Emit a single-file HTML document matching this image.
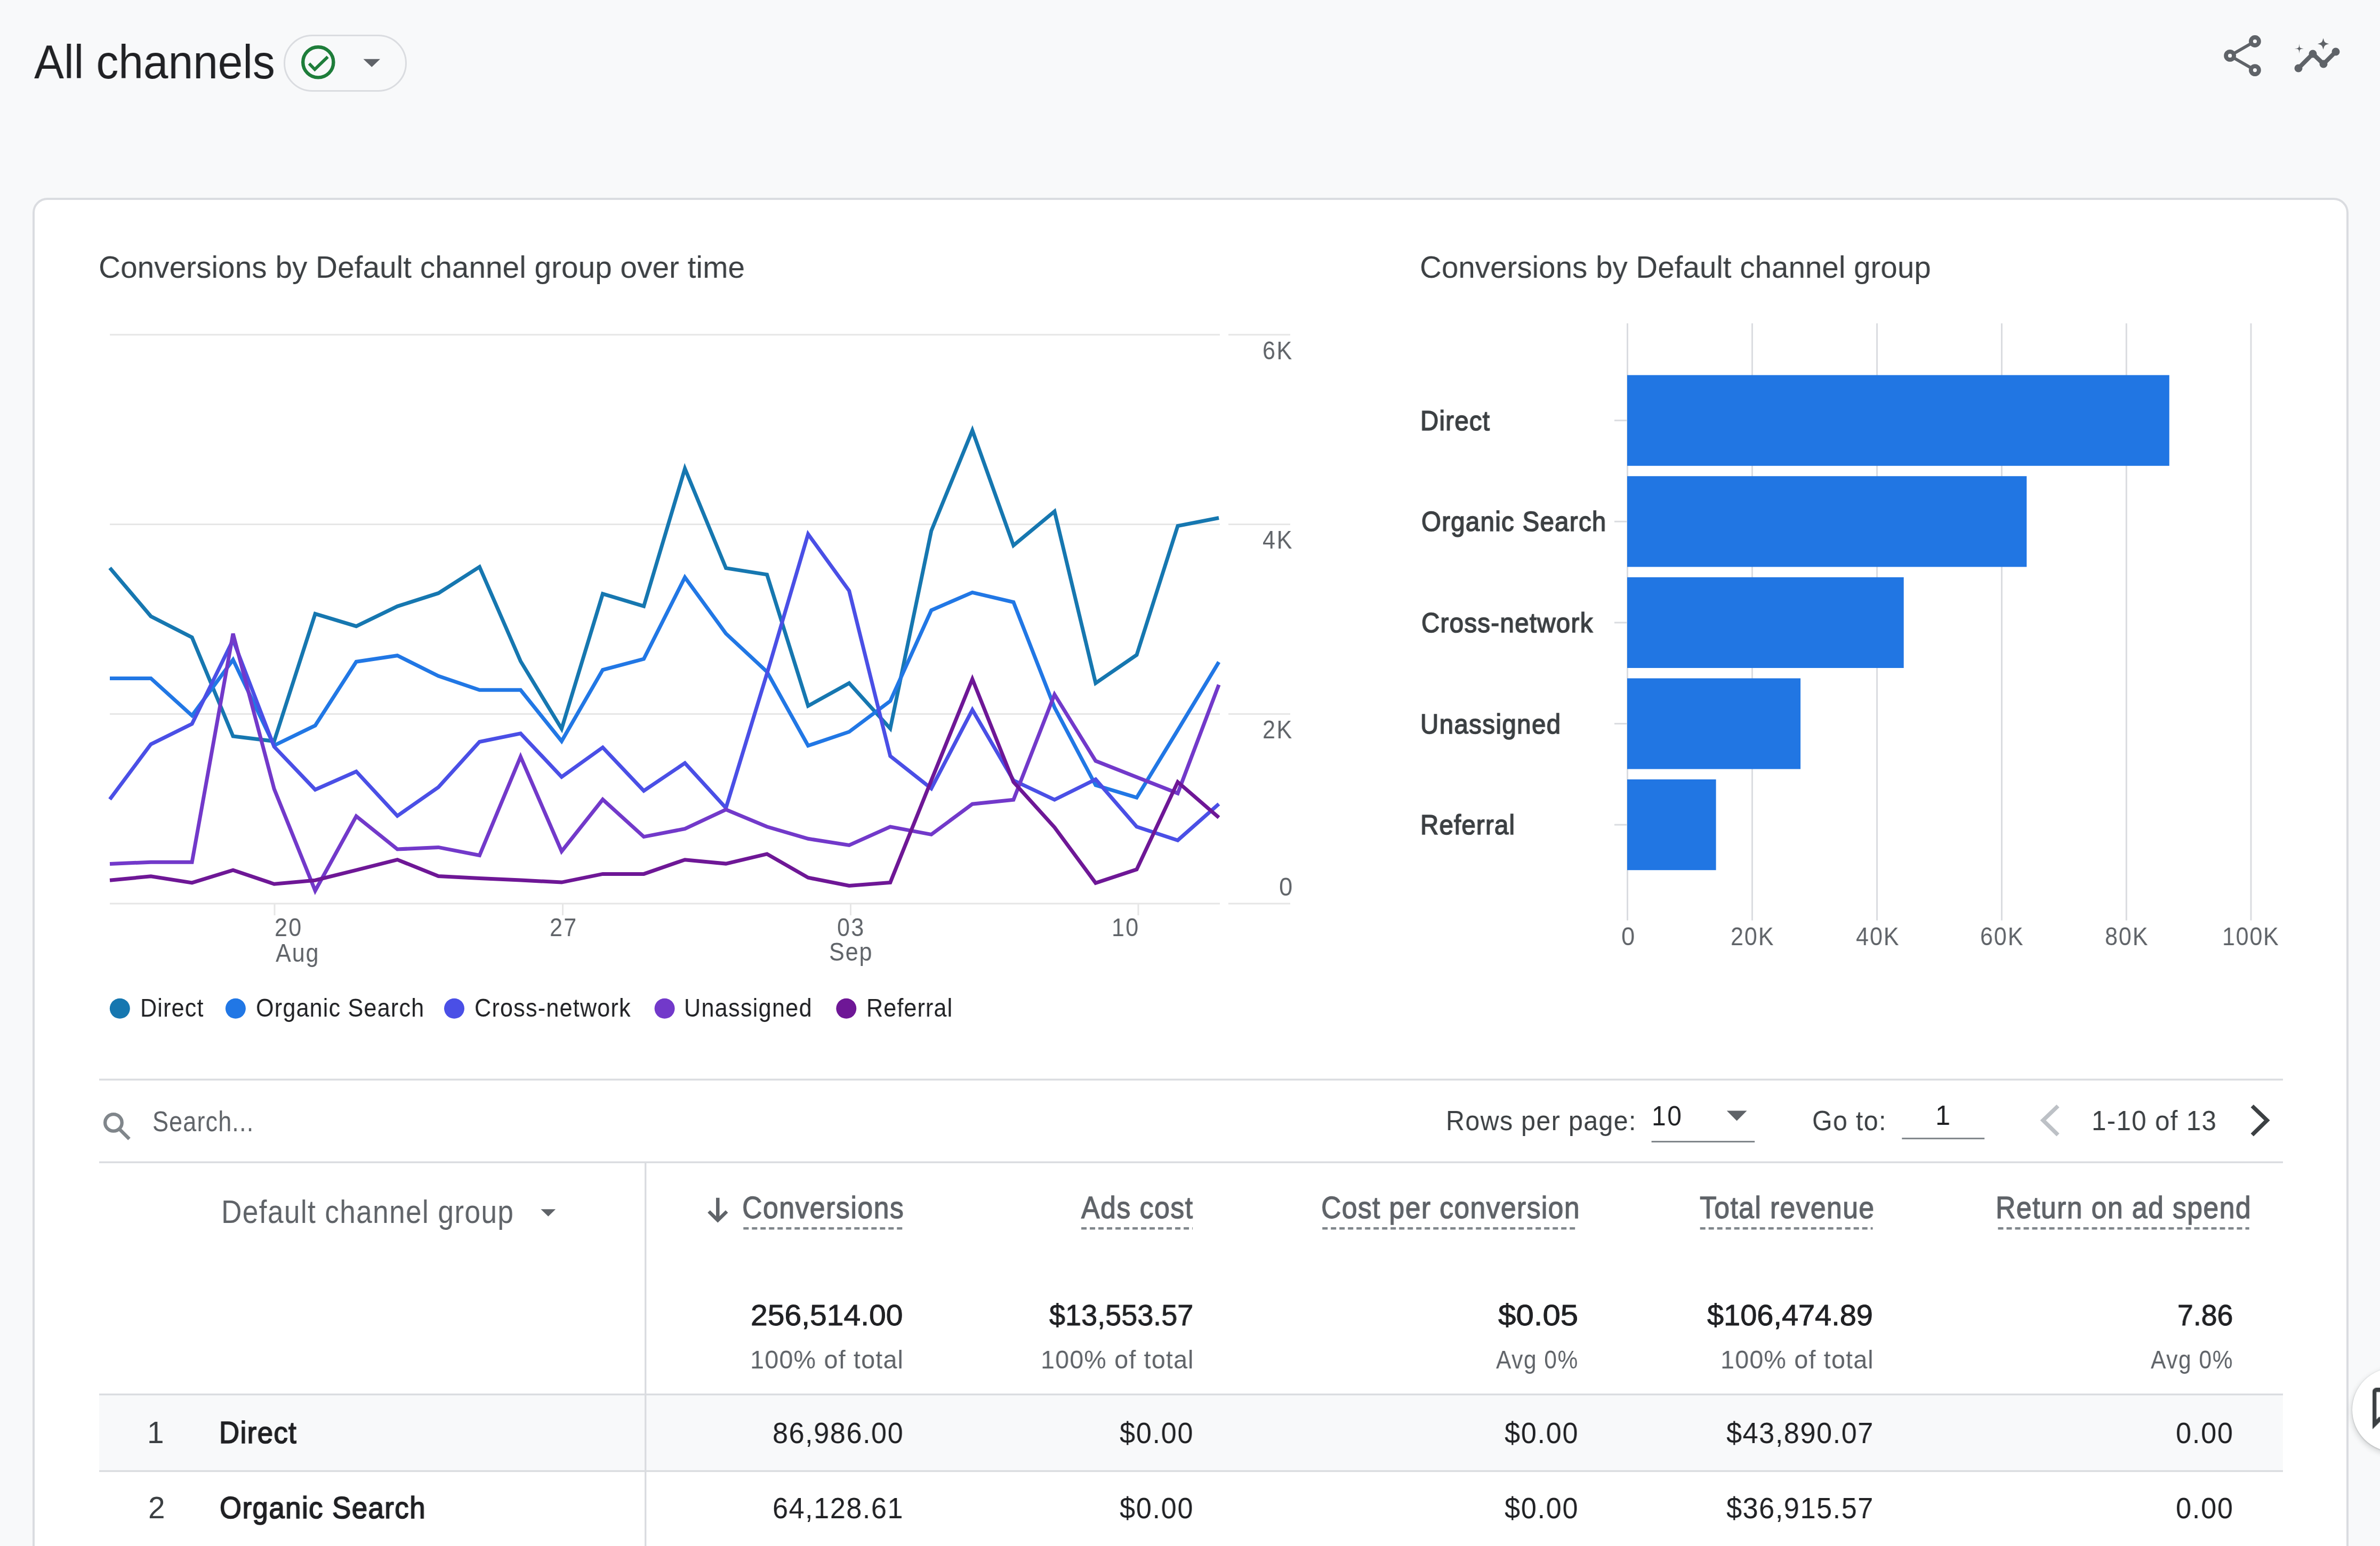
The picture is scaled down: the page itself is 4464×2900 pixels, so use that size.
<!DOCTYPE html>
<html><head><meta charset="utf-8"><title>All channels</title>
<style>
html,body{margin:0;padding:0;}
body{width:4464px;height:2900px;overflow:hidden;background:#f8f9fa;position:relative;font-family:'Liberation Sans', sans-serif;}
.t{position:absolute;line-height:1;white-space:pre;transform-origin:0 0;will-change:transform;}
.card{position:absolute;left:61px;top:371px;width:4344px;height:2700px;box-sizing:border-box;border:4px solid #dadce0;border-radius:28px;background:#fff;}
.pill{position:absolute;left:531.5px;top:65.1px;width:231.3px;height:106.5px;box-sizing:border-box;border:3px solid #dadce0;border-radius:54px;}
svg{overflow:visible}
</style></head><body>
<div class="card"></div>
<div class="pill"></div>
<svg style="position:absolute;left:0;top:0" width="4464" height="2900" viewBox="0 0 4464 2900">
<rect x="206" y="626.4" width="2082" height="3" fill="#e6e6e6"/>
<rect x="2304" y="626.4" width="116" height="3" fill="#e6e6e6"/>
<rect x="206" y="982.1" width="2082" height="3" fill="#e6e6e6"/>
<rect x="2304" y="982.1" width="116" height="3" fill="#e6e6e6"/>
<rect x="206" y="1337.8" width="2082" height="3" fill="#e6e6e6"/>
<rect x="2304" y="1337.8" width="116" height="3" fill="#e6e6e6"/>
<rect x="206" y="1693.5" width="2082" height="3" fill="#e6e6e6"/>
<rect x="2304" y="1693.5" width="116" height="3" fill="#e6e6e6"/>
<rect x="513.5" y="1695" width="3" height="22" fill="#e6e6e6"/>
<rect x="1054.0" y="1695" width="3" height="22" fill="#e6e6e6"/>
<rect x="1594.0" y="1695" width="3" height="22" fill="#e6e6e6"/>
<rect x="2133.5" y="1695" width="3" height="22" fill="#e6e6e6"/>
<polyline points="206.0,1065.2 283.0,1156.1 360.1,1195.6 437.1,1381.0 514.2,1390.4 591.2,1151.4 668.2,1174.7 745.3,1137.3 822.3,1112.7 899.4,1063.3 976.4,1240.2 1053.4,1367.0 1130.5,1113.9 1207.5,1137.2 1284.6,879.0 1361.6,1065.7 1438.6,1077.9 1515.7,1324.1 1592.7,1281.5 1669.8,1366.6 1746.8,995.8 1823.8,807.4 1900.9,1023.1 1977.9,959.3 2055.0,1281.4 2132.0,1228.5 2209.0,986.6 2286.1,971.5" fill="none" stroke="#1677b0" stroke-width="7" stroke-linejoin="miter" stroke-miterlimit="4"/>
<polyline points="206.0,1272.5 283.0,1272.5 360.1,1342.4 437.1,1237.6 514.2,1398.3 591.2,1361.0 668.2,1241.3 745.3,1229.7 822.3,1268.1 899.4,1294.3 976.4,1294.3 1053.4,1390.3 1130.5,1256.5 1207.5,1236.1 1284.6,1083.0 1361.6,1188.5 1438.6,1260.2 1515.7,1398.8 1592.7,1372.7 1669.8,1315.0 1746.8,1144.7 1823.8,1111.3 1900.9,1129.5 1977.9,1327.0 2055.0,1472.9 2132.0,1496.0 2209.0,1369.6 2286.1,1241.9" fill="none" stroke="#2177e5" stroke-width="7" stroke-linejoin="miter" stroke-miterlimit="4"/>
<polyline points="206.0,1499.4 283.0,1396.0 360.1,1357.8 437.1,1200.3 514.2,1400.6 591.2,1481.2 668.2,1447.2 745.3,1530.5 822.3,1476.5 899.4,1391.5 976.4,1375.8 1053.4,1457.3 1130.5,1402.0 1207.5,1483.4 1284.6,1431.4 1361.6,1515.6 1438.6,1263.3 1515.7,1001.9 1592.7,1108.3 1669.8,1418.3 1746.8,1479.1 1823.8,1331.6 1900.9,1463.8 1977.9,1500.2 2055.0,1461.9 2132.0,1550.7 2209.0,1576.2 2286.1,1508.1" fill="none" stroke="#4a4fe6" stroke-width="7" stroke-linejoin="miter" stroke-miterlimit="4"/>
<polyline points="206.0,1620.5 283.0,1617.2 360.1,1617.2 437.1,1188.7 514.2,1479.8 591.2,1670.8 668.2,1531.0 745.3,1593.0 822.3,1589.4 899.4,1604.5 976.4,1419.4 1053.4,1596.9 1130.5,1499.7 1207.5,1569.6 1284.6,1554.7 1361.6,1518.6 1438.6,1550.8 1515.7,1573.3 1592.7,1585.5 1669.8,1550.8 1746.8,1565.4 1823.8,1508.2 1900.9,1500.2 1977.9,1302.7 2055.0,1427.3 2132.0,1457.7 2209.0,1488.1 2286.1,1284.5" fill="none" stroke="#7239ca" stroke-width="7" stroke-linejoin="miter" stroke-miterlimit="4"/>
<polyline points="206.0,1651.2 283.0,1643.8 360.1,1655.9 437.1,1632.1 514.2,1658.2 591.2,1651.2 668.2,1632.1 745.3,1612.6 822.3,1643.5 899.4,1647.6 976.4,1651.0 1053.4,1655.1 1130.5,1639.4 1207.5,1639.4 1284.6,1612.7 1361.6,1620.1 1438.6,1601.9 1515.7,1646.3 1592.7,1661.5 1669.8,1655.4 1746.8,1463.9 1823.8,1273.8 1900.9,1466.8 1977.9,1551.9 2055.0,1656.4 2132.0,1630.9 2209.0,1466.8 2286.1,1533.6" fill="none" stroke="#6e1796" stroke-width="7" stroke-linejoin="miter" stroke-miterlimit="4"/>
<circle cx="224.8" cy="1891.7" r="19" fill="#1677b0"/>
<circle cx="441.9" cy="1891.7" r="19" fill="#2177e5"/>
<circle cx="852.0" cy="1891.7" r="19" fill="#4a4fe6"/>
<circle cx="1246.6" cy="1891.7" r="19" fill="#7239ca"/>
<circle cx="1587.3" cy="1891.7" r="19" fill="#6e1796"/>
<rect x="3051.0" y="606.5" width="3" height="1120" fill="#dadce0"/>
<rect x="3285.0" y="606.5" width="3" height="1120" fill="#dadce0"/>
<rect x="3519.1" y="606.5" width="3" height="1120" fill="#dadce0"/>
<rect x="3753.0" y="606.5" width="3" height="1120" fill="#dadce0"/>
<rect x="3986.8" y="606.5" width="3" height="1120" fill="#dadce0"/>
<rect x="4220.5" y="606.5" width="3" height="1120" fill="#dadce0"/>
<rect x="3052" y="703.6" width="1016.8" height="170.2" fill="#2176e3"/>
<rect x="3028" y="787.2" width="24" height="3" fill="#dadce0"/>
<rect x="3052" y="893.2" width="749.3" height="170.2" fill="#2176e3"/>
<rect x="3028" y="976.8" width="24" height="3" fill="#dadce0"/>
<rect x="3052" y="1082.8" width="518.7" height="170.2" fill="#2176e3"/>
<rect x="3028" y="1166.4" width="24" height="3" fill="#dadce0"/>
<rect x="3052" y="1272.4" width="325.1" height="170.2" fill="#2176e3"/>
<rect x="3028" y="1356.0" width="24" height="3" fill="#dadce0"/>
<rect x="3052" y="1462.0" width="166.6" height="170.2" fill="#2176e3"/>
<rect x="3028" y="1545.6" width="24" height="3" fill="#dadce0"/>
<rect x="186" y="2023.4" width="4096" height="3.4" fill="#dadce0"/>
<rect x="186" y="2178.5" width="4096" height="3.4" fill="#dadce0"/>
<rect x="186" y="2617.2" width="4096" height="141" fill="#f8f9fa"/>
<rect x="186" y="2614.0" width="4096" height="3.4" fill="#dadce0"/>
<rect x="186" y="2757.8" width="4096" height="3.4" fill="#dadce0"/>
<rect x="1209" y="2180" width="3.4" height="720" fill="#dadce0"/>
<line x1="1394.3" y1="2304.3" x2="1692.6" y2="2304.3" stroke="#80868b" stroke-width="4.5" stroke-dasharray="10 6"/>
<line x1="2028.1" y1="2304.3" x2="2237.0" y2="2304.3" stroke="#80868b" stroke-width="4.5" stroke-dasharray="10 6"/>
<line x1="2480.2" y1="2304.3" x2="2959.0" y2="2304.3" stroke="#80868b" stroke-width="4.5" stroke-dasharray="10 6"/>
<line x1="3188.7" y1="2304.3" x2="3512.6" y2="2304.3" stroke="#80868b" stroke-width="4.5" stroke-dasharray="10 6"/>
<line x1="3747.5" y1="2304.3" x2="4218.7" y2="2304.3" stroke="#80868b" stroke-width="4.5" stroke-dasharray="10 6"/>
<polygon points="1014.4,2268.3 1042.1,2268.3 1028.3,2281.8" fill="#5f6368"/>
<line x1="1346.3" y1="2246.8" x2="1346.3" y2="2286" stroke="#5f6368" stroke-width="6.5"/>
<polyline points="1329.5,2272.5 1346.3,2289 1363.2,2272.5" fill="none" stroke="#5f6368" stroke-width="6.5"/>
<circle cx="212.9" cy="2105.9" r="15.8" fill="none" stroke="#80868b" stroke-width="6.3"/>
<line x1="224" y1="2118" x2="242.5" y2="2136.5" stroke="#80868b" stroke-width="6.5"/>
<polygon points="3238.8,2083.5 3276.5,2083.5 3257.6,2102.4" fill="#5f6368"/>
<rect x="3097.6" y="2140" width="193.6" height="3" fill="#80868b"/>
<rect x="3567.3" y="2134.1" width="154.9" height="3" fill="#80868b"/>
<polyline points="3860,2074.6 3832,2101.5 3860,2128.9" fill="none" stroke="#bdc1c6" stroke-width="7.5"/>
<polyline points="4224.2,2074.6 4252.2,2101.5 4224.2,2128.9" fill="none" stroke="#3c4043" stroke-width="7.5"/>
<circle cx="596.8" cy="116.8" r="28.6" fill="none" stroke="#1e7d3a" stroke-width="6.4"/>
<polyline points="579.8,119.3 590.4,130.2 614.7,106.7" fill="none" stroke="#1e7d3a" stroke-width="5.8"/>
<polygon points="681.5,110.8 713,110.8 697.3,125.8" fill="#5f6368"/>
<line x1="4182.6" y1="104.4" x2="4229.4" y2="77.5" stroke="#5f6368" stroke-width="5.8"/>
<line x1="4182.6" y1="104.4" x2="4229.4" y2="131.6" stroke="#5f6368" stroke-width="5.8"/>
<circle cx="4182.6" cy="104.4" r="7.5" fill="#f8f9fa" stroke="#5f6368" stroke-width="7.8"/>
<circle cx="4229.4" cy="77.5" r="7.5" fill="#f8f9fa" stroke="#5f6368" stroke-width="7.8"/>
<circle cx="4229.4" cy="131.6" r="7.5" fill="#f8f9fa" stroke="#5f6368" stroke-width="7.8"/>
<polyline points="4311,128 4338,101 4358,120 4381,97" fill="none" stroke="#5f6368" stroke-width="8" stroke-linejoin="round"/>
<circle cx="4311" cy="128" r="7.5" fill="#5f6368"/>
<circle cx="4338" cy="101" r="7.5" fill="#5f6368"/>
<circle cx="4358" cy="120" r="7.5" fill="#5f6368"/>
<circle cx="4381" cy="97" r="7.5" fill="#5f6368"/>
<path d="M4312.6,82.1 C4313.3,90.6 4313.3,90.6 4321.8,91.3 C4313.3,92.0 4313.3,92.0 4312.6,100.5 C4311.900000000001,92.0 4311.900000000001,92.0 4303.400000000001,91.3 C4311.900000000001,90.6 4311.900000000001,90.6 4312.6,82.1Z" fill="#5f6368"/>
<path d="M4357.6,71.5 C4360.0,79.89999999999999 4360.0,79.89999999999999 4368.400000000001,82.3 C4360.0,84.7 4360.0,84.7 4357.6,93.1 C4355.200000000001,84.7 4355.200000000001,84.7 4346.8,82.3 C4355.200000000001,79.89999999999999 4355.200000000001,79.89999999999999 4357.6,71.5Z" fill="#5f6368"/>
</svg>
<div class="t" style="left:63.70px;top:71.66px;font-size:89.10px;font-weight:400;color:#202124;transform:scaleX(0.9406)">All channels</div>
<div class="t" style="left:184.66px;top:473.34px;font-size:57.70px;font-weight:400;color:#3c4043;transform:scaleX(0.9843)">Conversions by Default channel group over time</div>
<div class="t" style="left:2662.87px;top:473.34px;font-size:57.70px;font-weight:400;color:#3c4043;transform:scaleX(0.9802)">Conversions by Default channel group</div>
<div class="t" style="left:2368.15px;top:632.52px;font-size:48.40px;font-weight:400;color:#5f6368;transform:scaleX(0.8900);letter-spacing:2.96px">6K</div>
<div class="t" style="left:2368.08px;top:988.22px;font-size:48.40px;font-weight:400;color:#5f6368;transform:scaleX(0.8900);letter-spacing:3.03px">4K</div>
<div class="t" style="left:2368.15px;top:1344.02px;font-size:48.40px;font-weight:400;color:#5f6368;transform:scaleX(0.8900);letter-spacing:2.96px">2K</div>
<div class="t" style="left:2399.32px;top:1638.52px;font-size:48.40px;font-weight:400;color:#5f6368;transform:scaleX(0.9369)">0</div>
<div class="t" style="left:515.15px;top:1714.62px;font-size:48.40px;font-weight:400;color:#5f6368;transform:scaleX(0.8900);letter-spacing:2.60px">20</div>
<div class="t" style="left:517.30px;top:1762.72px;font-size:48.40px;font-weight:400;color:#5f6368;transform:scaleX(0.8900);letter-spacing:2.18px">Aug</div>
<div class="t" style="left:1030.55px;top:1714.62px;font-size:48.40px;font-weight:400;color:#5f6368;transform:scaleX(0.8900);letter-spacing:2.57px">27</div>
<div class="t" style="left:1570.32px;top:1714.82px;font-size:48.40px;font-weight:400;color:#5f6368;transform:scaleX(0.8900);letter-spacing:2.62px">03</div>
<div class="t" style="left:1555.33px;top:1761.02px;font-size:48.40px;font-weight:400;color:#5f6368;transform:scaleX(0.8900);letter-spacing:2.15px">Sep</div>
<div class="t" style="left:2084.96px;top:1714.82px;font-size:48.40px;font-weight:400;color:#5f6368;transform:scaleX(0.8900);letter-spacing:2.52px">10</div>
<div class="t" style="left:3040.60px;top:1731.92px;font-size:48.40px;font-weight:400;color:#5f6368;transform:scaleX(0.9369)">0</div>
<div class="t" style="left:3246.08px;top:1731.92px;font-size:48.40px;font-weight:400;color:#5f6368;transform:scaleX(0.8900);letter-spacing:2.18px">20K</div>
<div class="t" style="left:3480.59px;top:1731.92px;font-size:48.40px;font-weight:400;color:#5f6368;transform:scaleX(0.8900);letter-spacing:2.22px">40K</div>
<div class="t" style="left:3713.68px;top:1731.92px;font-size:48.40px;font-weight:400;color:#5f6368;transform:scaleX(0.8900);letter-spacing:2.18px">60K</div>
<div class="t" style="left:3947.68px;top:1731.92px;font-size:48.40px;font-weight:400;color:#5f6368;transform:scaleX(0.8900);letter-spacing:2.19px">80K</div>
<div class="t" style="left:4167.87px;top:1731.92px;font-size:48.40px;font-weight:400;color:#5f6368;transform:scaleX(0.8900);letter-spacing:1.90px">100K</div>
<div class="t" style="left:480.34px;top:1866.76px;font-size:47.53px;font-weight:400;color:#202124;transform:scaleX(0.9078);letter-spacing:1.31px">Organic Search</div>
<div class="t" style="left:262.55px;top:1866.76px;font-size:47.53px;font-weight:400;color:#202124;transform:scaleX(0.9078);letter-spacing:1.26px">Direct</div>
<div class="t" style="left:890.44px;top:1866.76px;font-size:47.53px;font-weight:400;color:#202124;transform:scaleX(0.9078);letter-spacing:1.33px">Cross-network</div>
<div class="t" style="left:1283.05px;top:1866.76px;font-size:47.53px;font-weight:400;color:#202124;transform:scaleX(0.9078);letter-spacing:1.43px">Unassigned</div>
<div class="t" style="left:1624.75px;top:1866.76px;font-size:47.53px;font-weight:400;color:#202124;transform:scaleX(0.9078);letter-spacing:1.22px">Referral</div>
<div class="t" style="left:2664.21px;top:763.79px;font-size:51.74px;font-weight:400;color:#3c4043;transform:scaleX(0.9158);letter-spacing:1.37px;-webkit-text-stroke:1.6px #3c4043">Direct</div>
<div class="t" style="left:2665.63px;top:953.39px;font-size:51.74px;font-weight:400;color:#3c4043;transform:scaleX(0.9158);letter-spacing:1.43px;-webkit-text-stroke:1.6px #3c4043">Organic Search</div>
<div class="t" style="left:2665.63px;top:1142.99px;font-size:51.74px;font-weight:400;color:#3c4043;transform:scaleX(0.9158);letter-spacing:1.45px;-webkit-text-stroke:1.6px #3c4043">Cross-network</div>
<div class="t" style="left:2664.21px;top:1332.59px;font-size:51.74px;font-weight:400;color:#3c4043;transform:scaleX(0.9158);letter-spacing:1.56px;-webkit-text-stroke:1.6px #3c4043">Unassigned</div>
<div class="t" style="left:2664.21px;top:1522.19px;font-size:51.74px;font-weight:400;color:#3c4043;transform:scaleX(0.9158);letter-spacing:1.33px;-webkit-text-stroke:1.6px #3c4043">Referral</div>
<div class="t" style="left:286.35px;top:2077.26px;font-size:53.20px;font-weight:400;color:#5f6368;transform:scaleX(0.8457);letter-spacing:1.35px">Search...</div>
<div class="t" style="left:2712.03px;top:2077.06px;font-size:51.31px;font-weight:400;color:#3c4043;transform:scaleX(0.9434);letter-spacing:1.42px">Rows per page:</div>
<div class="t" style="left:3399.08px;top:2077.06px;font-size:51.31px;font-weight:400;color:#3c4043;transform:scaleX(0.9434);letter-spacing:1.39px">Go to:</div>
<div class="t" style="left:3922.75px;top:2077.06px;font-size:51.31px;font-weight:400;color:#3c4043;transform:scaleX(0.9634);letter-spacing:1.31px">1-10 of 13</div>
<div class="t" style="left:3098.16px;top:2067.69px;font-size:51.74px;font-weight:400;color:#202124;transform:scaleX(0.9273);letter-spacing:2.70px">10</div>
<div class="t" style="left:3630.46px;top:2066.69px;font-size:51.74px;font-weight:400;color:#202124;transform:scaleX(0.9761)">1</div>
<div class="t" style="left:414.54px;top:2243.08px;font-size:60.61px;font-weight:400;color:#5f6368;transform:scaleX(0.8781);letter-spacing:1.54px">Default channel group</div>
<div class="t" style="left:1391.71px;top:2235.77px;font-size:58.14px;font-weight:400;color:#5f6368;transform:scaleX(0.8911);letter-spacing:1.67px;-webkit-text-stroke:1.3px #5f6368">Conversions</div>
<div class="t" style="left:2028.14px;top:2235.77px;font-size:58.14px;font-weight:400;color:#5f6368;transform:scaleX(0.8911);letter-spacing:1.67px;-webkit-text-stroke:1.3px #5f6368">Ads cost</div>
<div class="t" style="left:2477.60px;top:2235.77px;font-size:58.14px;font-weight:400;color:#5f6368;transform:scaleX(0.8911);letter-spacing:1.49px;-webkit-text-stroke:1.3px #5f6368">Cost per conversion</div>
<div class="t" style="left:3187.63px;top:2235.77px;font-size:58.14px;font-weight:400;color:#5f6368;transform:scaleX(0.8911);letter-spacing:1.51px;-webkit-text-stroke:1.3px #5f6368">Total revenue</div>
<div class="t" style="left:3743.38px;top:2235.77px;font-size:58.14px;font-weight:400;color:#5f6368;transform:scaleX(0.8911);letter-spacing:1.56px;-webkit-text-stroke:1.3px #5f6368">Return on ad spend</div>
<div class="t" style="left:1407.75px;top:2439.93px;font-size:55.23px;font-weight:400;color:#202124;transform:scaleX(1.0332);-webkit-text-stroke:0.9px #202124">256,514.00</div>
<div class="t" style="left:1967.86px;top:2439.93px;font-size:55.23px;font-weight:400;color:#202124;transform:scaleX(0.9778);-webkit-text-stroke:0.9px #202124">$13,553.57</div>
<div class="t" style="left:2809.90px;top:2439.93px;font-size:55.23px;font-weight:400;color:#202124;transform:scaleX(1.0871);-webkit-text-stroke:0.9px #202124">$0.05</div>
<div class="t" style="left:3202.44px;top:2439.93px;font-size:55.23px;font-weight:400;color:#202124;transform:scaleX(1.0126);-webkit-text-stroke:0.9px #202124">$106,474.89</div>
<div class="t" style="left:4084.12px;top:2439.93px;font-size:55.23px;font-weight:400;color:#202124;transform:scaleX(0.9708);-webkit-text-stroke:0.9px #202124">7.86</div>
<div class="t" style="left:1406.86px;top:2525.53px;font-size:48.98px;font-weight:400;color:#5f6368;transform:scaleX(0.9551);letter-spacing:1.22px">100% of total</div>
<div class="t" style="left:1951.76px;top:2525.53px;font-size:48.98px;font-weight:400;color:#5f6368;transform:scaleX(0.9534);letter-spacing:1.22px">100% of total</div>
<div class="t" style="left:2806.00px;top:2525.53px;font-size:48.98px;font-weight:400;color:#5f6368;transform:scaleX(0.8685);letter-spacing:1.75px">Avg 0%</div>
<div class="t" style="left:3226.96px;top:2525.53px;font-size:48.98px;font-weight:400;color:#5f6368;transform:scaleX(0.9541);letter-spacing:1.22px">100% of total</div>
<div class="t" style="left:4034.00px;top:2525.53px;font-size:48.98px;font-weight:400;color:#5f6368;transform:scaleX(0.8696);letter-spacing:1.75px">Avg 0%</div>
<div class="t" style="left:276.48px;top:2659.60px;font-size:56.69px;font-weight:400;color:#3c4043;transform:scaleX(0.9968)">1</div>
<div class="t" style="left:410.78px;top:2659.60px;font-size:56.69px;font-weight:400;color:#202124;transform:scaleX(0.9307);letter-spacing:1.50px;-webkit-text-stroke:1.7px #202124">Direct</div>
<div class="t" style="left:1448.51px;top:2660.83px;font-size:55.23px;font-weight:400;color:#202124;transform:scaleX(0.9470);letter-spacing:1.59px">86,986.00</div>
<div class="t" style="left:2099.79px;top:2660.83px;font-size:55.23px;font-weight:400;color:#202124;transform:scaleX(0.9470);letter-spacing:1.78px">$0.00</div>
<div class="t" style="left:2822.19px;top:2660.83px;font-size:55.23px;font-weight:400;color:#202124;transform:scaleX(0.9470);letter-spacing:1.78px">$0.00</div>
<div class="t" style="left:3238.09px;top:2660.83px;font-size:55.23px;font-weight:400;color:#202124;transform:scaleX(0.9470);letter-spacing:1.60px">$43,890.07</div>
<div class="t" style="left:4081.45px;top:2660.83px;font-size:55.23px;font-weight:400;color:#202124;transform:scaleX(0.9470);letter-spacing:1.81px">0.00</div>
<div class="t" style="left:278.17px;top:2800.80px;font-size:56.69px;font-weight:400;color:#3c4043;transform:scaleX(0.9968)">2</div>
<div class="t" style="left:412.36px;top:2800.80px;font-size:56.69px;font-weight:400;color:#202124;transform:scaleX(0.9307);letter-spacing:1.57px;-webkit-text-stroke:1.7px #202124">Organic Search</div>
<div class="t" style="left:1449.09px;top:2802.03px;font-size:55.23px;font-weight:400;color:#202124;transform:scaleX(0.9470);letter-spacing:1.58px">64,128.61</div>
<div class="t" style="left:2099.79px;top:2802.03px;font-size:55.23px;font-weight:400;color:#202124;transform:scaleX(0.9470);letter-spacing:1.78px">$0.00</div>
<div class="t" style="left:2822.19px;top:2802.03px;font-size:55.23px;font-weight:400;color:#202124;transform:scaleX(0.9470);letter-spacing:1.78px">$0.00</div>
<div class="t" style="left:3238.09px;top:2802.03px;font-size:55.23px;font-weight:400;color:#202124;transform:scaleX(0.9470);letter-spacing:1.60px">$36,915.57</div>
<div class="t" style="left:4081.45px;top:2802.03px;font-size:55.23px;font-weight:400;color:#202124;transform:scaleX(0.9470);letter-spacing:1.81px">0.00</div>
<div style="position:absolute;left:4412px;top:2566px;width:157px;height:157px;border-radius:50%;background:#fff;box-shadow:0 4px 8px 3px rgba(60,64,67,.15),0 1px 3px rgba(60,64,67,.3)"></div><svg style="position:absolute;left:0;top:0" width="4464" height="2900"><g transform="translate(4441.7,2595.6) scale(3.9)" fill="#3c4043"><path d="M20 2H4c-1.1 0-1.99.9-1.99 2L2 22l4-4h14c1.1 0 2-.9 2-2V4c0-1.1-.9-2-2-2zm0 14H5.17l-.59.59-.58.58V4h16v12zm-9-4h2v2h-2zm0-6h2v4h-2z"/></g></svg>
</body></html>
